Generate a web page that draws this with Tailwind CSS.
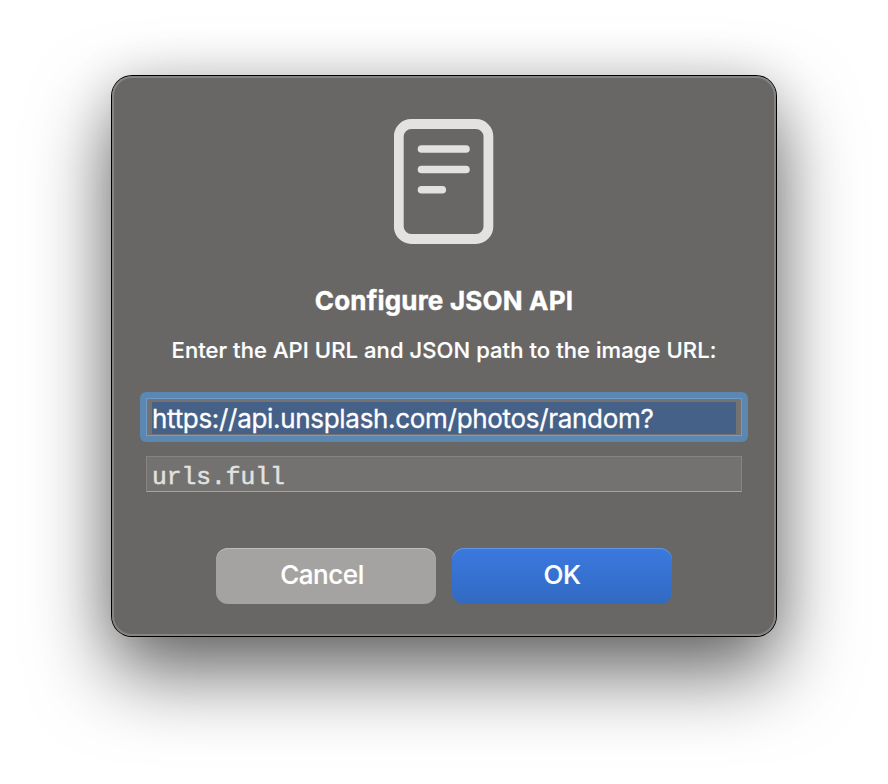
<!DOCTYPE html>
<html lang="en">
<head>
<meta charset="utf-8">
<title>Configure JSON API</title>
<script src="https://cdn.jsdelivr.net/npm/@tailwindcss/browser@4"></script>
</head>
<body class="h-[784px] w-[888px] overflow-hidden bg-white px-[112px] pt-[76px] font-['Inter',sans-serif] text-white">
<main class="flex h-[560px] w-[664px] flex-col items-center rounded-[20px] bg-[#686765] pt-[43px] shadow-[inset_0_0_0_2px_#858482,0_0_0_1px_#000,0_36px_80px_rgba(0,0,0,0.6),0_0_50px_rgba(0,0,0,0.12)]">
  <svg class="h-[125px] w-[100px] shrink-0" viewBox="0 0 100 125" fill="none" stroke="#e3e2e0">
    <rect x="4.8" y="5" width="89.6" height="115" rx="12.5" stroke-width="9.8"/>
    <path d="M27.5 30H72M27.5 50.5H72M27.5 70.8H48.3" stroke-width="7.6" stroke-linecap="round"/>
  </svg>
  <h1 class="mt-[41px] h-8 text-[26px] leading-8 font-bold tracking-[0.2px] whitespace-nowrap [-webkit-text-stroke:0.4px_white]">Configure JSON API</h1>
  <p class="mt-[19px] h-7 text-[22px] leading-7 font-medium tracking-[0.08px] whitespace-nowrap [-webkit-text-stroke:0.2px_white]">Enter the API URL and JSON path to the image URL:</p>
  <div class="mt-[28px] h-[50px] w-[608px] rounded-[6px] bg-[#5b87b0] p-[6px]">
    <div class="h-[38px] border border-[#6d9dca] bg-[#747371] pt-[3px] pr-[5px] pl-[5px]">
      <div class="h-8 bg-[#466188] text-[26px] leading-[34px] tracking-[-0.31px] whitespace-nowrap [-webkit-text-stroke:0.3px_white]"><span>https://api.unsplash.com/photos/random?</span></div>
    </div>
  </div>
  <div class="mt-[14px] h-9 w-[596px] border border-[#858482] border-b-[#a5a4a2] bg-[#737270] pl-[5px] font-['Liberation_Mono',monospace] text-[24.6px] leading-[41px] text-[#e3e2e0] [-webkit-text-stroke:0.5px_#e3e2e0]"><span>urls.full</span></div>
  <div class="mt-[56px] flex gap-4 text-[26px] leading-[52px]">
    <button class="h-14 w-[220px] rounded-[12px] bg-[#a4a3a1] pr-[8px] pb-[2px] font-medium tracking-[-0.45px] shadow-[inset_0_1px_0_#bebdbb] [-webkit-text-stroke:0.2px_white]"><span>Cancel</span></button>
    <button class="h-14 w-[220px] rounded-[12px] bg-linear-to-b from-[#3a79df] to-[#326ac2] pb-[2px] font-medium tracking-[-0.5px] shadow-[inset_0_1px_0_#6396e6] [-webkit-text-stroke:0.2px_white]"><span>OK</span></button>
  </div>
</main>
</body>
</html>
